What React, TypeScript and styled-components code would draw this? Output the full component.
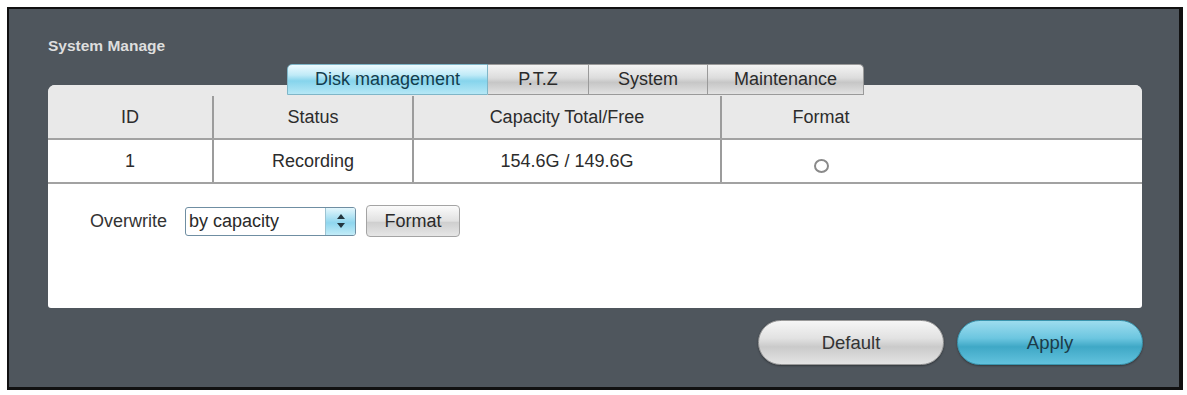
import React from 'react';
import styled, { createGlobalStyle } from 'styled-components';

const GlobalStyle = createGlobalStyle`
    html, body {
        margin: 0;
        padding: 0;
        background: #ffffff;
    }
    * {
        box-sizing: border-box;
    }
    body {
        font-family: "Liberation Sans", Arial, sans-serif;
    }
`;

const Frame = styled.div`
    margin: 7px 0 0 7px;
    width: 1176px;
    height: 383px;
    background: #4f565d;
    border: 2px solid #111;
    border-right-width: 4px;
    border-bottom-width: 3px;
    padding: 28px 0 0 39px;
    display: flex;
    flex-direction: column;
`;

const Title = styled.div`
    color: #dedede;
    font-weight: bold;
    font-size: 15.5px;
    height: 27px;
`;

const TabBar = styled.div`
    display: flex;
    margin-left: 239px;
    height: 31px;
    margin-bottom: -10px;
    position: relative;
    z-index: 1;
`;

const Tab = styled.div<{ $active?: boolean; $w: number }>`
    width: ${p => p.$w}px;
    display: flex;
    align-items: center;
    justify-content: center;
    font-size: 18px;
    color: ${p => (p.$active ? '#123c4c' : '#2a2a2a')};
    border: 1px solid ${p => (p.$active ? '#7fb6c8' : '#9a9a9a')};
    border-left-width: 0;
    background: ${p =>
        p.$active
            ? 'linear-gradient(#eefbff 0%, #bfeaf7 35%, #86d4ec 55%, #b6e8f6 100%)'
            : 'linear-gradient(#f4f4f4 0%, #dcdcdc 45%, #c6c6c6 60%, #e2e2e2 100%)'};
    &:first-child {
        border-left-width: 1px;
        border-top-left-radius: 5px;
    }
    &:last-child {
        border-top-right-radius: 5px;
    }
`;

const Panel = styled.div`
    width: 1094px;
    height: 223px;
    background: #ffffff;
    border-radius: 7px 7px 3px 3px;
    overflow: hidden;
    display: flex;
    flex-direction: column;
`;

const Row = styled.div<{ $head?: boolean }>`
    display: grid;
    grid-template-columns: 164px 200px 308px 200px 1fr;
    background: ${p => (p.$head ? '#e9e9e9' : '#ffffff')};
    padding-top: ${p => (p.$head ? '11px' : '0')};
    border-bottom: 2px solid #a2a2a2;
`;

const Cell = styled.div<{ $line?: boolean }>`
    height: 42px;
    display: flex;
    align-items: center;
    justify-content: center;
    font-size: 18px;
    color: #2c2c2c;
    border-left: ${p => (p.$line ? '2px solid #9c9c9c' : 'none')};
`;

const Radio = styled.span`
    width: 15px;
    height: 14px;
    border: 2px solid #8a8a8a;
    border-radius: 50%;
    margin-top: 9px;
`;

const Controls = styled.div`
    display: flex;
    align-items: center;
    padding-left: 42px;
    margin-top: 21px;
`;

const Label = styled.span`
    font-size: 18px;
    color: #333;
    margin-right: 18px;
`;

const Select = styled.div`
    width: 171px;
    height: 29px;
    border: 1px solid #6f8ea2;
    border-radius: 3px;
    display: flex;
    overflow: hidden;
    margin-right: 10px;
`;

const SelectText = styled.div`
    flex: 1;
    font-size: 18px;
    color: #2a2a2a;
    display: flex;
    align-items: center;
    padding-left: 3px;
`;

const Spinner = styled.div`
    width: 30px;
    background: linear-gradient(#e4f7fd, #8fd6ee 55%, #c2ecf8);
    border-left: 1px solid #9cc3d2;
    display: flex;
    align-items: center;
    justify-content: center;
`;

const SmallButton = styled.div`
    width: 94px;
    height: 32px;
    border: 1px solid #a4a4a4;
    border-radius: 4px;
    background: linear-gradient(#fbfbfb, #e1e1e1 50%, #cfcfcf 55%, #e6e6e6);
    display: flex;
    align-items: center;
    justify-content: center;
    font-size: 18px;
    color: #2a2a2a;
`;

const Footer = styled.div`
    display: flex;
    justify-content: flex-end;
    gap: 13px;
    width: 1095px;
    margin-top: 12px;
`;

const PillButton = styled.div<{ $primary?: boolean }>`
    width: 186px;
    height: 45px;
    border-radius: 23px;
    display: flex;
    align-items: center;
    justify-content: center;
    font-size: 18.5px;
    color: ${p => (p.$primary ? '#1c3b48' : '#333')};
    border: 1px solid ${p => (p.$primary ? '#3a95ae' : '#9a9a9a')};
    background: ${p =>
        p.$primary
            ? 'linear-gradient(#9ddcee 0%, #6cc6e0 40%, #3fa8c6 60%, #62c2dd 100%)'
            : 'linear-gradient(#f6f6f6 0%, #e2e2e2 40%, #cacaca 60%, #e4e4e4 100%)'};
    box-shadow: 0 1px 2px rgba(0, 0, 0, 0.35);
`;

const tabs = [
    { label: 'Disk management', w: 201, active: true },
    { label: 'P.T.Z', w: 101 },
    { label: 'System', w: 119 },
    { label: 'Maintenance', w: 156 },
];

const columns = ['ID', 'Status', 'Capacity Total/Free', 'Format', ''];

const App = () => {
    return (
        <>
            <GlobalStyle />
            <Frame>
                <Title>System Manage</Title>
                <TabBar>
                    {tabs.map(t => (
                        <Tab key={t.label} $w={t.w} $active={t.active}>
                            {t.label}
                        </Tab>
                    ))}
                </TabBar>
                <Panel>
                    <Row $head>
                        {columns.map((c, i) => (
                            <Cell key={i} $line={i > 0 && i < 4}>
                                {c}
                            </Cell>
                        ))}
                    </Row>
                    <Row>
                        <Cell>1</Cell>
                        <Cell $line>Recording</Cell>
                        <Cell $line>154.6G / 149.6G</Cell>
                        <Cell $line>
                            <Radio />
                        </Cell>
                        <Cell />
                    </Row>
                    <Controls>
                        <Label>Overwrite</Label>
                        <Select>
                            <SelectText>by capacity</SelectText>
                            <Spinner>
                                <svg width="10" height="16" viewBox="0 0 10 16">
                                    <path d="M5 1 L9 6 H1 Z" fill="#23363f" />
                                    <path d="M5 15 L9 10 H1 Z" fill="#23363f" />
                                </svg>
                            </Spinner>
                        </Select>
                        <SmallButton>Format</SmallButton>
                    </Controls>
                </Panel>
                <Footer>
                    <PillButton>Default</PillButton>
                    <PillButton $primary>Apply</PillButton>
                </Footer>
            </Frame>
        </>
    );
};

export default App;
